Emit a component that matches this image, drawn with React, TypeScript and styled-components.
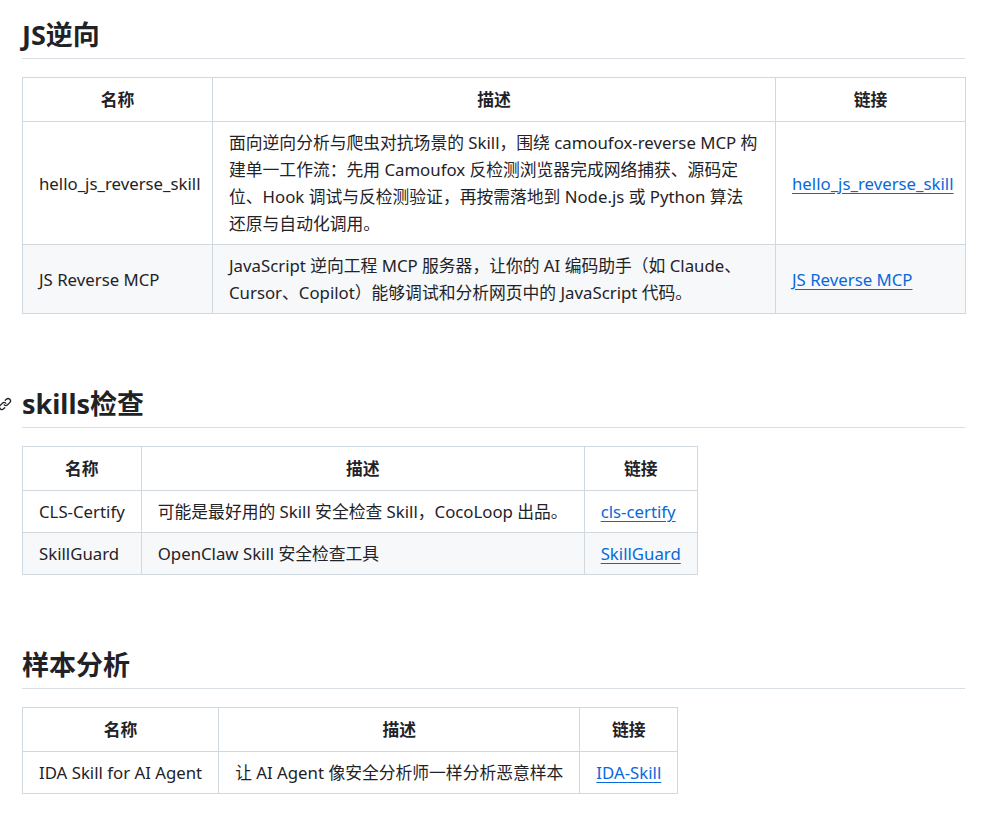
import React from "react";
import styled, { createGlobalStyle } from "styled-components";

const Global = createGlobalStyle`
  body { margin: 0; background: #fff; color: #1f2328;
    font-family: "Noto Sans", "Noto Sans CJK SC", sans-serif; font-size: 16.8px; }
`;
const Page = styled.div`padding: 19px 16px 0 22px; width: 943px;`;
const Heading = styled.h2<{ $first?: boolean }>`
  position: relative; margin: ${(p) => (p.$first ? "0" : "74px")} 0 18px 0;
  font-size: 27px; font-weight: 700; line-height: 32px;
  padding-bottom: 7px; border-bottom: 1px solid #d8dee4;
`;
const Anchor = styled.span`position: absolute; left: -24px; top: 9px; display: flex;`;
const Table = styled.table<{ $full?: boolean }>`
  border-collapse: collapse; ${(p) => (p.$full ? "width: 943px; table-layout: fixed;" : "")}
  line-height: 27px;
`;
const Th = styled.th`border: 1px solid #d1d9e0; padding: 8px 16px; font-weight: 700; text-align: center;`;
const Tr = styled.tr`&:nth-child(even) { background: #f6f8fa; }`;
const Td = styled.td`border: 1px solid #d1d9e0; padding: 7px 16px; text-align: left; vertical-align: middle;`;
const A = styled.a`color: #0969da; text-decoration: underline; text-underline-offset: 3px;`;

const LinkIcon = () => (
  <svg width="14" height="14" viewBox="0 0 16 16" fill="#1f2328">
    <path d="m7.775 3.275 1.25-1.25a3.5 3.5 0 1 1 4.95 4.950l-2.5 2.5a3.5 3.5 0 0 1-4.950 0 .751.751 0 0 1 .018-1.042.751.751 0 0 1 1.042-.018 1.998 1.998 0 0 0 2.830 0l2.5-2.5a2.002 2.002 0 0 0-2.830-2.830l-1.25 1.25a.751.751 0 0 1-1.042-.018.751.751 0 0 1-.018-1.042Zm-4.69 9.640a1.998 1.998 0 0 0 2.830 0l1.25-1.250a.751.751 0 0 1 1.042.018.751.751 0 0 1 .018 1.042l-1.25 1.25a3.5 3.5 0 1 1-4.950-4.950l2.5-2.5a3.5 3.5 0 0 1 4.950 0 .751.751 0 0 1-.018 1.042.751.751 0 0 1-1.042.018 1.998 1.998 0 0 0-2.830 0l-2.5 2.5a1.998 1.998 0 0 0 0 2.830Z" />
  </svg>
);

type Row = [string, string, string];
const Section = ({ title, rows, full, first, anchor }: { title: string; rows: Row[]; full?: boolean; first?: boolean; anchor?: boolean }) => (
  <>
    <Heading $first={first}>
      {anchor && <Anchor><LinkIcon /></Anchor>}
      {title}
    </Heading>
    <Table $full={full}>
      {full && (
        <colgroup>
          <col style={{ width: 190 }} />
          <col style={{ width: 563 }} />
          <col style={{ width: 190 }} />
        </colgroup>
      )}
      <thead>
        <tr><Th>名称</Th><Th>描述</Th><Th>链接</Th></tr>
      </thead>
      <tbody>
        {rows.map((r, i) => (
          <Tr key={i}>
            <Td>{r[0]}</Td>
            <Td>{r[1]}</Td>
            <Td><A href="#">{r[2]}</A></Td>
          </Tr>
        ))}
      </tbody>
    </Table>
  </>
);

export default function App() {
  return (
    <Page>
      <Global />
      <Section first full title="JS逆向" rows={[
        ["hello_js_reverse_skill", "面向逆向分析与爬虫对抗场景的 Skill，围绕 camoufox-reverse MCP 构建单一工作流：先用 Camoufox 反检测浏览器完成网络捕获、源码定位、Hook 调试与反检测验证，再按需落地到 Node.js 或 Python 算法还原与自动化调用。", "hello_js_reverse_skill"],
        ["JS Reverse MCP", "JavaScript 逆向工程 MCP 服务器，让你的 AI 编码助手（如 Claude、Cursor、Copilot）能够调试和分析网页中的 JavaScript 代码。", "JS Reverse MCP"],
      ]} />
      <Section anchor title="skills检查" rows={[
        ["CLS-Certify", "可能是最好用的 Skill 安全检查 Skill，CocoLoop 出品。", "cls-certify"],
        ["SkillGuard", "OpenClaw Skill 安全检查工具", "SkillGuard"],
      ]} />
      <Section title="样本分析" rows={[
        ["IDA Skill for AI Agent", "让 AI Agent 像安全分析师一样分析恶意样本", "IDA-Skill"],
      ]} />
    </Page>
  );
}
